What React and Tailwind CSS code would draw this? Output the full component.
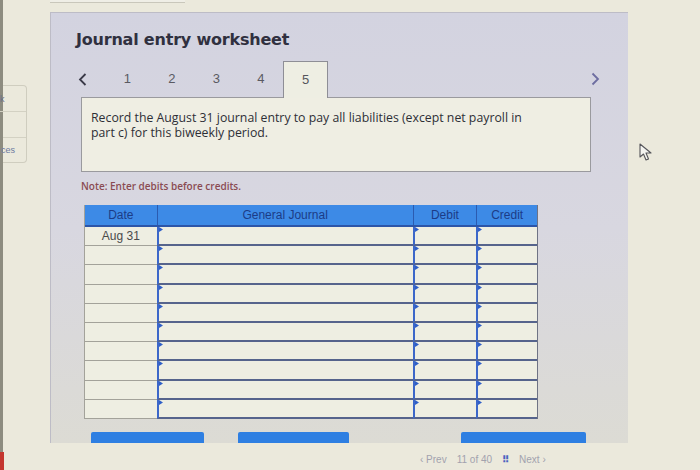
import React from "react";

const TABS = ["1", "2", "3", "4"];
const ROWS = 10;

const Tick = () => (
  <svg width="4" height="5" viewBox="0 0 4 5" className="shrink-0">
    <path d="M0 0 L4 2.5 L0 5 Z" fill="#2f5fc8" />
  </svg>
);

const InputCell = ({ w }) => (
  <div className={`${w} h-full flex items-start border-l-2 border-b-2 border-l-[#3c67c9] border-b-[#56648c]`}>
    <Tick />
  </div>
);

const JournalRow = ({ date }) => (
  <div className="flex shrink-0 h-[19.2px] bg-[#eeeee2]">
    <div className="w-[72px] h-full flex items-center justify-center border-b border-[#a3a29a] text-[12px] text-[#4a4a4a]">
      {date}
    </div>
    <InputCell w="w-[257px]" />
    <InputCell w="w-[64px]" />
    <InputCell w="w-[61px]" />
  </div>
);

export default function App() {
  return (
    <div
      className="relative w-[700px] h-[470px] overflow-hidden bg-[#ebe9dc] flex"
      style={{ fontFamily: "'Liberation Sans', Arial, sans-serif" }}
    >
      {/* left sidebar sliver */}
      <div className="w-[50px] shrink-0 flex flex-col border-l-[3px] border-[#8d8c80]">
        <div className="mt-[85px] w-[24px] h-[78px] border border-l-0 border-[#cfcdbf] rounded-r-[4px] flex flex-col">
          <div className="h-[26px] border-b border-[#d3d1c3] text-[9px] leading-[26px] text-[#6b6f86] -ml-[3px]">k</div>
          <div className="h-[26px] border-b border-[#d3d1c3]" />
          <div className="flex-1 text-[9px] leading-[24px] text-[#6d7aa0] -ml-[2px]">ces</div>
        </div>
        <div className="mt-auto mb-0 w-[4px] h-[18px] bg-[#c4362f] -ml-[3px]" />
      </div>

      {/* main panel column */}
      <div className="w-[578px] shrink-0 flex flex-col">
        <div className="w-[135px] h-[3px] shrink-0 border-b border-[#c9c7bb] bg-[#efeee6]" />
        <div className="mt-[9px] h-[431px] shrink-0 overflow-hidden border-t border-l border-[#bdbcc6] bg-gradient-to-b from-[#d3d3e0] via-[#d8d7e0] to-[#dcdbd4]">
          <h1
            className="pt-[16px] ml-[25px] text-[16px] font-bold text-[#30303f] leading-[22px] tracking-[-0.2px]"
            style={{ fontFamily: "'DejaVu Sans', Verdana, sans-serif" }}
          >
            Journal entry worksheet
          </h1>

          {/* tabs */}
          <div className="mt-[10px] flex items-end h-[36px]">
            <div className="ml-[9px] w-[45px] h-full flex items-center justify-center text-[#3a3a4a]">
              <svg width="9" height="13" viewBox="0 0 9 13">
                <path d="M7.5 1 L2 6.5 L7.5 12" fill="none" stroke="#3a3a48" strokeWidth="1.8" />
              </svg>
            </div>
            {TABS.map((t) => (
              <div key={t} className="w-[44.5px] h-full flex items-center justify-center text-[13px] text-[#5a5a62]">
                {t}
              </div>
            ))}
            <div className="relative z-10 -mb-px w-[45px] h-[37px] flex items-center justify-center border border-b-0 border-[#8e8e96] bg-[#eeeee3] text-[13px] text-[#55555c]">
              5
            </div>
            <div className="ml-auto mr-[28px] h-full flex items-center">
              <svg width="9" height="14" viewBox="0 0 9 14">
                <path d="M1.5 1.5 L7 7 L1.5 12.5" fill="none" stroke="#6d6da0" strokeWidth="1.8" />
              </svg>
            </div>
          </div>

          {/* prompt box */}
          <div
            className="ml-[30px] w-[510px] h-[75px] border border-[#9a9a9e] bg-[#efeee3] px-[9px] pt-[12px] text-[12.3px] leading-[15px] text-[#2e2e36]"
            style={{ fontFamily: "'Open Sans', 'DejaVu Sans', sans-serif" }}
          >
            <p className="w-[445px]">
              Record the August 31 journal entry to pay all liabilities (except net payroll in part c) for this biweekly period.
            </p>
          </div>

          <p
            className="mt-[8px] ml-[30px] text-[10px] font-semibold text-[#8a4b52] leading-[12px]"
            style={{ fontFamily: "'Open Sans', 'DejaVu Sans', sans-serif" }}
          >
            Note: Enter debits before credits.
          </p>

          {/* journal table */}
          <div className="mt-[13px] ml-[33px] w-[454px] border-l border-r border-l-[#a3a29a] border-r-[#6f7384] flex flex-col">
            <div className="flex shrink-0 h-[22px] bg-[#3d8ae6] border-b-2 border-[#2c55a8] text-[12px] text-[#1c3c86]">
              <div className="w-[72px] flex items-center justify-center">Date</div>
              <div className="w-[257px] flex items-center justify-center border-l border-[#2b5bb0]">General Journal</div>
              <div className="w-[64px] flex items-center justify-center border-l border-[#2b5bb0]">Debit</div>
              <div className="w-[61px] flex items-center justify-center border-l border-[#2b5bb0]">Credit</div>
            </div>
            {Array.from({ length: ROWS }).map((_, i) => (
              <JournalRow key={i} date={i === 0 ? "Aug 31" : ""} />
            ))}
          </div>

          {/* action buttons, clipped by panel */}
          <div className="mt-[13px] flex">
            <div className="ml-[40px] w-[113px] h-[14px] bg-[#2e7fe2] rounded-[2px]" />
            <div className="ml-[34px] w-[111px] h-[14px] bg-[#2e7fe2] rounded-[2px]" />
            <div className="ml-[112px] w-[125px] h-[14px] bg-[#2e7fe2] rounded-[2px]" />
          </div>
        </div>

        <div className="mt-[11px] ml-[370px] flex items-center gap-[10px] text-[10px] leading-[12px] text-[#a2a2ae]">
          <span>‹ Prev</span>
          <span>11 of 40</span>
          <span className="text-[#4a62c0] font-bold">⠿</span>
          <span>Next ›</span>
        </div>
      </div>

      {/* mouse cursor */}
      <svg className="absolute left-[639px] top-[143px]" width="14" height="19" viewBox="0 0 14 19">
        <path
          d="M1 1 L1 14 L4.5 11 L7 17 L9.5 16 L7 10 L12 10 Z"
          fill="#f4f4f0"
          stroke="#55555a"
          strokeWidth="1.1"
          strokeLinejoin="round"
        />
      </svg>
    </div>
  );
}
